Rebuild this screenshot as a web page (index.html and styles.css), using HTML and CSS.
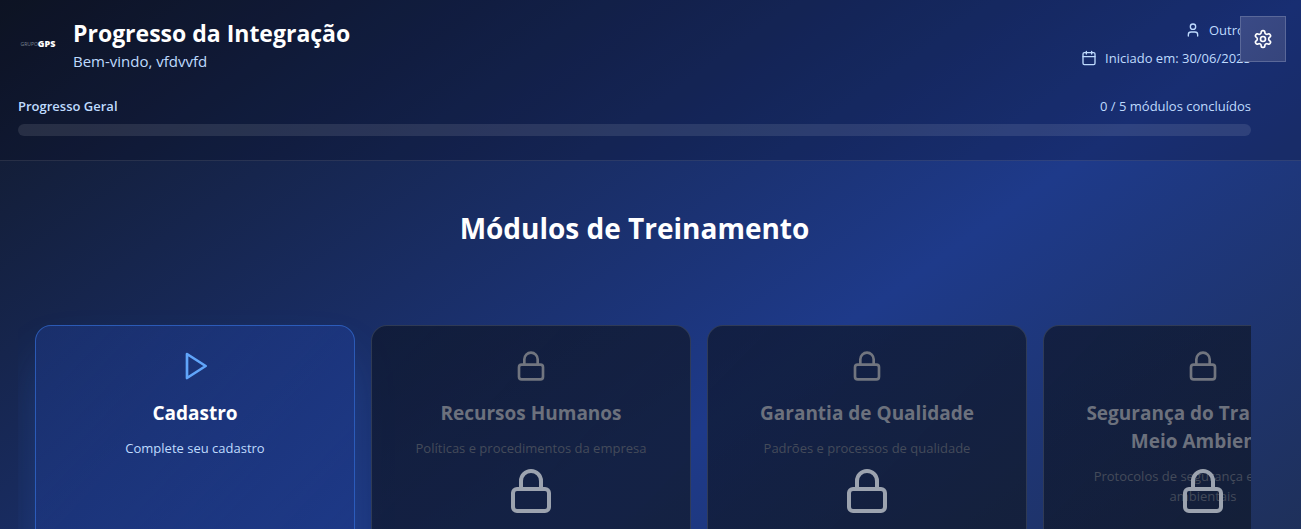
FILE: index.html
```html
<!DOCTYPE html>
<html lang="pt-BR">
<head>
<meta charset="utf-8">
<meta name="viewport" content="width=device-width, initial-scale=1">
<title>Progresso da Integração</title>
<link rel="stylesheet" href="styles.css">
</head>
<body>
<svg class="sprite" aria-hidden="true">
  <symbol id="lock" viewBox="0 0 24 24"><rect width="18" height="11" x="3" y="11" rx="2"/><path d="M7 11V7a5 5 0 0 1 10 0v4"/></symbol>
  <symbol id="play" viewBox="0 0 24 24"><polygon points="6 3 20 12 6 21 6 3"/></symbol>
  <symbol id="user" viewBox="0 0 24 24"><path d="M19 21v-2a4 4 0 0 0-4-4H9a4 4 0 0 0-4 4v2"/><circle cx="12" cy="7" r="4"/></symbol>
  <symbol id="calendar" viewBox="0 0 24 24"><path d="M8 2v4M16 2v4"/><rect width="18" height="18" x="3" y="4" rx="2"/><path d="M3 10h18"/></symbol>
  <symbol id="settings" viewBox="0 0 24 24"><path d="M12.22 2h-.44a2 2 0 0 0-2 2v.18a2 2 0 0 1-1 1.73l-.43.25a2 2 0 0 1-2 0l-.15-.08a2 2 0 0 0-2.73.73l-.22.38a2 2 0 0 0 .73 2.73l.15.1a2 2 0 0 1 1 1.72v.51a2 2 0 0 1-1 1.74l-.15.09a2 2 0 0 0-.73 2.73l.22.38a2 2 0 0 0 2.73.73l.15-.08a2 2 0 0 1 2 0l.43.25a2 2 0 0 1 1 1.73V20a2 2 0 0 0 2 2h.44a2 2 0 0 0 2-2v-.18a2 2 0 0 1 1-1.73l.43-.25a2 2 0 0 1 2 0l.15.08a2 2 0 0 0 2.73-.73l.22-.39a2 2 0 0 0-.73-2.73l-.15-.08a2 2 0 0 1-1-1.74v-.5a2 2 0 0 1 1-1.74l.15-.09a2 2 0 0 0 .73-2.73l-.22-.38a2 2 0 0 0-2.73-.73l-.15.08a2 2 0 0 1-2 0l-.43-.25a2 2 0 0 1-1-1.73V4a2 2 0 0 0-2-2z"/><circle cx="12" cy="12" r="3"/></symbol>
</svg>
<div class="page">
  <button class="settings" type="button" aria-label="Configurações"><svg class="icon icon-md"><use href="#settings"/></svg></button>
  <header class="header">
    <div class="header-top">
      <div class="brand">
        <div class="logo"><span class="logo-light">GRUPO</span><span class="logo-bold">GPS</span></div>
        <div>
          <h1 class="title">Progresso da Integração</h1>
          <p class="welcome">Bem-vindo, vfdvvfd</p>
        </div>
      </div>
      <div class="meta">
        <div class="meta-row"><svg class="icon icon-sm"><use href="#user"/></svg><span>Outros</span></div>
        <div class="meta-row"><svg class="icon icon-sm"><use href="#calendar"/></svg><span>Iniciado em: 30/06/2025</span></div>
      </div>
    </div>
    <div class="progress-head"><span class="progress-label" id="progress-label">Progresso Geral</span><span>0 / 5 módulos concluídos</span></div>
    <div class="progress" role="progressbar" aria-labelledby="progress-label" aria-valuemin="0" aria-valuemax="5" aria-valuenow="0"></div>
  </header>
  <main class="main">
    <h2 class="heading">Módulos de Treinamento</h2>
    <div class="modules">
      <article class="card card-active">
        <svg class="icon icon-lg"><use href="#play"/></svg>
        <h3 class="card-title">Cadastro</h3>
        <p class="card-text">Complete seu cadastro</p>
      </article>
      <article class="card card-locked">
        <svg class="icon icon-lg"><use href="#lock"/></svg>
        <h3 class="card-title">Recursos Humanos</h3>
        <p class="card-text">Políticas e procedimentos da empresa</p>
        <div class="card-cover"><svg class="icon icon-xl"><use href="#lock"/></svg></div>
      </article>
      <article class="card card-locked">
        <svg class="icon icon-lg"><use href="#lock"/></svg>
        <h3 class="card-title">Garantia de Qualidade</h3>
        <p class="card-text">Padrões e processos de qualidade</p>
        <div class="card-cover"><svg class="icon icon-xl"><use href="#lock"/></svg></div>
      </article>
      <article class="card card-locked">
        <svg class="icon icon-lg"><use href="#lock"/></svg>
        <h3 class="card-title">Segurança do Trabalho e Meio Ambiente</h3>
        <p class="card-text">Protocolos de segurança e questões ambientais</p>
        <div class="card-cover"><svg class="icon icon-xl"><use href="#lock"/></svg></div>
      </article>
    </div>
  </main>
</div>
</body>
</html>
```
FILE: styles.css
```css
* { box-sizing: border-box; margin: 0; }

body {
  font-family: "Open Sans", "Noto Sans", sans-serif;
  font-size: 13px;
  line-height: 20px;
  color: #bfdbfe;
}

.sprite { position: absolute; width: 0; height: 0; }

.page {
  position: relative;
  height: 100vh;
  overflow: hidden;
  background: linear-gradient(to bottom right, #111827, #1e3a8a, #1f2937) 0 0 / 100% 930px;
}

.icon {
  flex: none;
  fill: none;
  stroke: currentColor;
  stroke-width: 2;
  stroke-linecap: round;
  stroke-linejoin: round;
}
.icon-sm { width: 16px; height: 16px; }
.icon-md { width: 20px; height: 20px; }
.icon-lg { width: 32px; height: 32px; }
.icon-xl { width: 48px; height: 48px; }

.settings {
  position: absolute;
  top: 16px;
  right: 15px;
  z-index: 2;
  display: grid;
  place-items: center;
  width: 46px;
  height: 46px;
  padding: 0;
  color: #fff;
  background: linear-gradient(to bottom right, #3a4a86, #36457c);
  border: 1px solid #5a6899;
}

.header {
  padding: 16px 50px 24px 18px;
  background: rgba(0, 0, 20, 0.2);
  border-bottom: 1px solid rgba(255, 255, 255, 0.1);
}
.header-top {
  display: flex;
  justify-content: space-between;
  align-items: center;
  margin-bottom: 24px;
}
.brand { display: flex; align-items: center; gap: 15px; }
.logo {
  display: flex;
  justify-content: center;
  align-items: center;
  width: 40px;
  height: 40px;
  line-height: 12px;
}
.logo-light { font-size: 5px; color: #7d8494; }
.logo-bold { font-size: 9px; font-weight: 800; color: #fff; }
.title { font-size: 23px; line-height: 34px; font-weight: 700; color: #fff; }
.welcome { font-size: 15px; line-height: 22px; }

.meta { display: grid; gap: 8px; justify-items: end; }
.meta-row { display: flex; align-items: center; gap: 8px; }

.progress-head { display: flex; justify-content: space-between; margin-bottom: 8px; }
.progress-label { font-weight: 600; }
.progress { height: 12px; border-radius: 6px; background: rgba(255, 255, 255, 0.1); }

.main { padding: 49px 50px 0 18px; }
.heading {
  margin-bottom: 63px;
  font-size: 28px;
  line-height: 36px;
  font-weight: 700;
  text-align: center;
  color: #fff;
}

.modules { display: flex; gap: 16px; padding: 16px 17px 48px; overflow: hidden; }
.card {
  position: relative;
  display: flex;
  flex: none;
  flex-direction: column;
  align-items: center;
  width: 320px;
  min-height: 332px;
  padding: 24px 32px;
  border: 1px solid;
  border-radius: 16px;
  text-align: center;
}
.card-title { margin: 17px 0 11px; font-size: 19px; line-height: 28px; font-weight: 700; }
.card-active {
  color: #60a5fa;
  border-color: rgba(59, 130, 246, 0.5);
  background: linear-gradient(to bottom right, rgba(30, 58, 138, 0.5), rgba(30, 58, 138, 0.8));
  box-shadow: 0 25px 50px -12px rgba(59, 130, 246, 0.3);
}
.card-active .card-title { color: #fff; }
.card-active .card-text { color: #bfdbfe; }
.card-locked {
  color: #71757f;
  border-color: rgba(90, 100, 120, 0.4);
  background: linear-gradient(to bottom right, rgba(14, 22, 42, 0.7), rgba(18, 26, 42, 0.72));
}
.card-locked .card-title { color: #6c717d; }
.card-locked .card-text { color: #444b5a; }
.card-cover {
  position: absolute;
  inset: 0;
  display: grid;
  place-items: center;
  color: #9ca3af;
}
```
